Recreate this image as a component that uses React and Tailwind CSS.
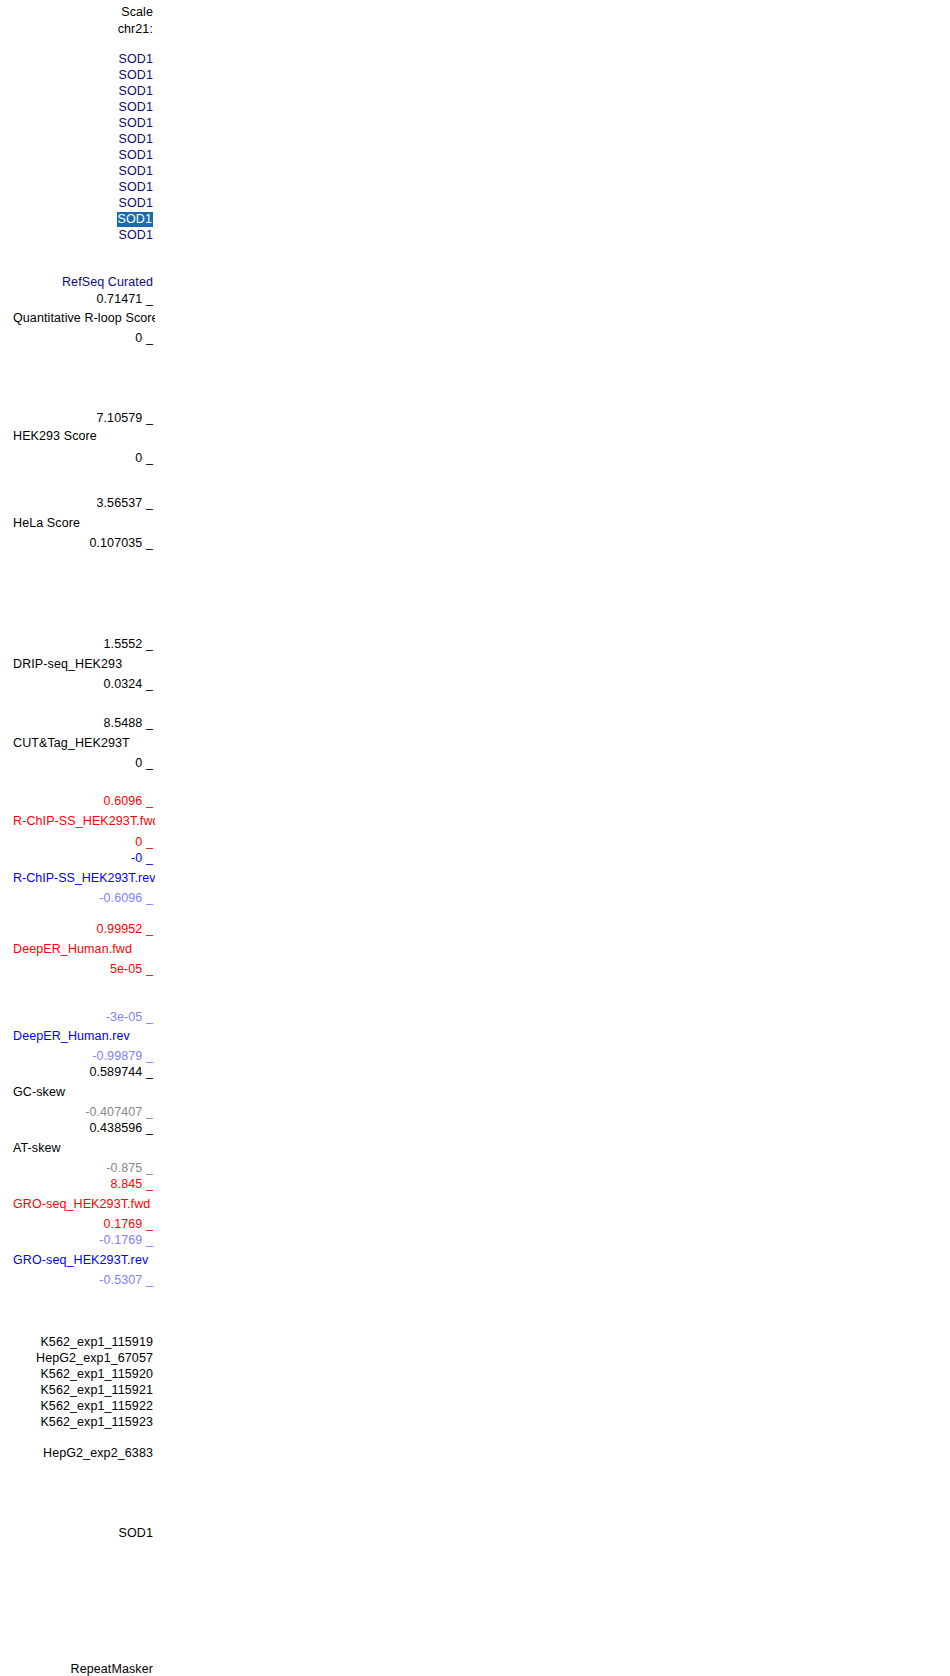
export default function App() {
  const navy = "text-[#0c0c78]";
  return (
    <div className="h-[1676px] w-[950px] overflow-hidden bg-white font-['Liberation_Sans',Arial,sans-serif] text-[12.5px] leading-[16px] tracking-[0.1px] text-black">
      <div className="w-[155px] overflow-hidden whitespace-nowrap pt-[4px] pr-[2px] text-right">
        <div>Scale</div>
        <div className="mt-[1px]">chr21:</div>

        <div className={`mt-[14px] ${navy}`}>SOD1</div>
        <div className={navy}>SOD1</div>
        <div className={navy}>SOD1</div>
        <div className={navy}>SOD1</div>
        <div className={navy}>SOD1</div>
        <div className={navy}>SOD1</div>
        <div className={navy}>SOD1</div>
        <div className={navy}>SOD1</div>
        <div className={navy}>SOD1</div>
        <div className={navy}>SOD1</div>
        <div>
          <span className="inline-block bg-[#1e6aac] pl-[1px] pr-[1px] leading-[15px] text-white">SOD1</span>
        </div>
        <div className={navy}>SOD1</div>

        <div className={`mt-[31px] ${navy}`}>RefSeq Curated</div>
        <div className="mt-[1px]">0.71471 _</div>
        <div className="-mr-[2px] mt-[3px] pl-[13px] text-left">Quantitative R-loop Score</div>
        <div className="mt-[4px]">0 _</div>

        <div className="mt-[64px]">7.10579 _</div>
        <div className="mt-[2px] pl-[13px] text-left">HEK293 Score</div>
        <div className="mt-[6px]">0 _</div>

        <div className="mt-[29px]">3.56537 _</div>
        <div className="mt-[4px] pl-[13px] text-left">HeLa Score</div>
        <div className="mt-[4px]">0.107035 _</div>

        <div className="mt-[85px]">1.5552 _</div>
        <div className="mt-[4px] pl-[13px] text-left">DRIP-seq_HEK293</div>
        <div className="mt-[4px]">0.0324 _</div>

        <div className="mt-[23px]">8.5488 _</div>
        <div className="mt-[4px] pl-[13px] text-left">CUT&amp;Tag_HEK293T</div>
        <div className="mt-[4px]">0 _</div>

        <div className="mt-[22px] text-[#ff0000]">0.6096 _</div>
        <div className="-mr-[2px] mt-[4px] pl-[13px] text-left text-[#ff0000]">R-ChIP-SS_HEK293T.fwd</div>
        <div className="mt-[5px] text-[#ff0000]">0 _</div>
        <div className="text-[#0000ff]">-0 _</div>
        <div className="-mr-[2px] mt-[4px] pl-[13px] text-left tracking-[0px] text-[#0000ff]">R-ChIP-SS_HEK293T.rev</div>
        <div className="mt-[4px] text-[#8080ff]">-0.6096 _</div>

        <div className="mt-[15px] text-[#ff0000]">0.99952 _</div>
        <div className="mt-[4px] pl-[13px] text-left text-[#ff0000]">DeepER_Human.fwd</div>
        <div className="mt-[4px] text-[#ff0000]">5e-05 _</div>

        <div className="mt-[32px] text-[#8080ff]">-3e-05 _</div>
        <div className="mt-[3px] pl-[13px] text-left text-[#0000ff]">DeepER_Human.rev</div>
        <div className="mt-[4px] text-[#8080ff]">-0.99879 _</div>

        <div>0.589744 _</div>
        <div className="mt-[4px] pl-[13px] text-left">GC-skew</div>
        <div className="mt-[4px] text-[#888888]">-0.407407 _</div>

        <div>0.438596 _</div>
        <div className="mt-[4px] pl-[13px] text-left">AT-skew</div>
        <div className="mt-[4px] text-[#888888]">-0.875 _</div>

        <div className="text-[#ff0000]">8.845 _</div>
        <div className="mt-[4px] pl-[13px] text-left text-[#ff0000]">GRO-seq_HEK293T.fwd</div>
        <div className="mt-[4px] text-[#ff0000]">0.1769 _</div>
        <div className="text-[#8080ff]">-0.1769 _</div>
        <div className="mt-[4px] pl-[13px] text-left text-[#0000ff]">GRO-seq_HEK293T.rev</div>
        <div className="mt-[4px] text-[#8080ff]">-0.5307 _</div>

        <div className="mt-[46px]">K562_exp1_115919</div>
        <div>HepG2_exp1_67057</div>
        <div>K562_exp1_115920</div>
        <div>K562_exp1_115921</div>
        <div>K562_exp1_115922</div>
        <div>K562_exp1_115923</div>

        <div className="mt-[15px]">HepG2_exp2_6383</div>

        <div className="mt-[64px]">SOD1</div>

        <div className="mt-[120px]">RepeatMasker</div>
      </div>
    </div>
  );
}
